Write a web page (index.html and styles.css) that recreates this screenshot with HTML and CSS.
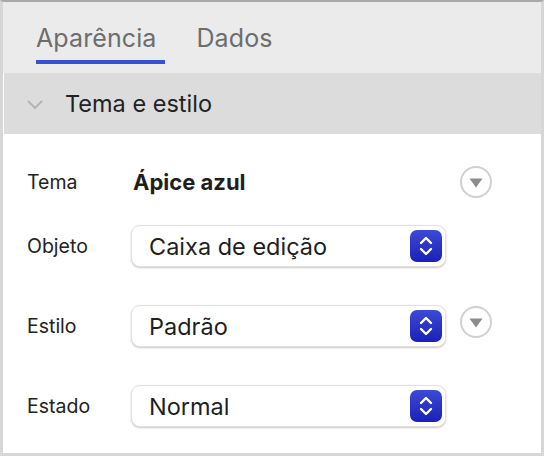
FILE: index.html
```html
<!DOCTYPE html>
<html lang="pt">
<head>
<meta charset="utf-8">
<title>Inspetor</title>
<link rel="stylesheet" href="styles.css">
</head>
<body>
<div class="panel">
  <div class="tabs">
    <div class="tab active">Aparência</div>
    <div class="tab">Dados</div>
  </div>
  <div class="content">
    <div class="section-header">
      <svg class="chevron" width="16" height="10" viewBox="0 0 16 10"><path d="M1.5 1.5 L8 8 L14.5 1.5" fill="none" stroke="#b4b4b4" stroke-width="2" stroke-linecap="round" stroke-linejoin="round"/></svg>
      <span class="section-title">Tema e estilo</span>
    </div>
    <div class="rows">
      <div class="row first">
        <div class="label">Tema</div>
        <div class="value-text">Ápice azul</div>
        <div class="circle-btn"><svg width="14" height="10" viewBox="0 0 14 10"><path d="M0.5 0.5 H13.5 L7 9.5 Z" fill="#8c8c8c"/></svg></div>
      </div>
      <div class="row">
        <div class="label">Objeto</div>
        <div class="select"><span>Caixa de edição</span><div class="stepper"><svg width="16" height="22" viewBox="0 0 16 22"><path d="M3 8 L8 3 L13 8 M3 14 L8 19 L13 14" fill="none" stroke="#fff" stroke-width="2.4" stroke-linecap="round" stroke-linejoin="round"/></svg></div></div>
      </div>
      <div class="row spaced">
        <div class="label">Estilo</div>
        <div class="select"><span>Padrão</span><div class="stepper"><svg width="16" height="22" viewBox="0 0 16 22"><path d="M3 8 L8 3 L13 8 M3 14 L8 19 L13 14" fill="none" stroke="#fff" stroke-width="2.4" stroke-linecap="round" stroke-linejoin="round"/></svg></div></div>
        <div class="circle-btn"><svg width="14" height="10" viewBox="0 0 14 10"><path d="M0.5 0.5 H13.5 L7 9.5 Z" fill="#8c8c8c"/></svg></div>
      </div>
      <div class="row spaced">
        <div class="label">Estado</div>
        <div class="select"><span>Normal</span><div class="stepper"><svg width="16" height="22" viewBox="0 0 16 22"><path d="M3 8 L8 3 L13 8 M3 14 L8 19 L13 14" fill="none" stroke="#fff" stroke-width="2.4" stroke-linecap="round" stroke-linejoin="round"/></svg></div></div>
      </div>
    </div>
  </div>
</div>
</body>
</html>
```

FILE: styles.css
```css
* { box-sizing: border-box; }
html, body { margin: 0; padding: 0; background: #ffffff; }
body {
  font-family: Inter, "Noto Sans", "Liberation Sans", sans-serif;
  width: 544px;
  height: 456px;
  overflow: hidden;
}
.panel {
  width: 544px;
  height: 456px;
  border-top: 2px solid #a9a9a9;
  border-left: 3px solid #d6d6d6;
  border-right: 3px solid #d6d6d6;
  border-bottom: 3px solid #d6d6d6;
  display: flex;
  flex-direction: column;
  background: #ffffff;
}
.tabs {
  background: #ebebeb;
  height: 71px;
  display: flex;
  padding-left: 33px;
  gap: 31px;
  flex-shrink: 0;
}
.tab {
  font-size: 25px;
  color: #6d6d6d;
  padding-top: 21px;
  height: 62px;
  line-height: 30px;
  letter-spacing: 0.1px;
}
.tab.active {
  border-bottom: 4px solid #3451d8;
  padding-right: 9px;
}
.content {
  flex: 1;
  padding-left: 1px;
  display: flex;
  flex-direction: column;
}
.section-header {
  background: #dcdcdc;
  height: 61px;
  display: flex;
  align-items: center;
  padding-left: 23px;
}
.chevron { margin-right: 22px; margin-top: 2px; }
.section-title {
  font-size: 23.5px;
  color: #222222;
}
.rows {
  display: flex;
  flex-direction: column;
  gap: 22px;
  padding: 27px 0 0 23px;
}
.row {
  display: flex;
  align-items: center;
  height: 42px;
}
.row.spaced { margin-top: 16px; }
.label {
  width: 104px;
  font-size: 19.5px;
  color: #222222;
  flex-shrink: 0;
}
.value-text {
  font-size: 22px;
  font-weight: 700;
  color: #1e1e1e;
  width: 329px;
  padding-left: 2px;
}
.select {
  width: 315px;
  height: 42px;
  background: #ffffff;
  border-radius: 9px;
  border: 1px solid #e2e2e2;
  box-shadow: 0 1px 2px rgba(0,0,0,0.22);
  display: flex;
  align-items: center;
  justify-content: space-between;
  padding: 0 3px 0 17px;
  font-size: 23.5px;
  color: #1e1e1e;
  margin-right: 14px;
}
.stepper {
  width: 32px;
  height: 32px;
  border-radius: 7px;
  background: linear-gradient(#3d4ad6, #1a20b6);
  display: flex;
  align-items: center;
  justify-content: center;
}
.circle-btn {
  width: 32px;
  height: 32px;
  border-radius: 50%;
  border: 2px solid #d0d0d0;
  background: #ffffff;
  display: flex;
  align-items: center;
  justify-content: center;
  padding-top: 2px;
  margin-top: -8px;
}
.row.first .circle-btn { margin-top: 0; }
```
